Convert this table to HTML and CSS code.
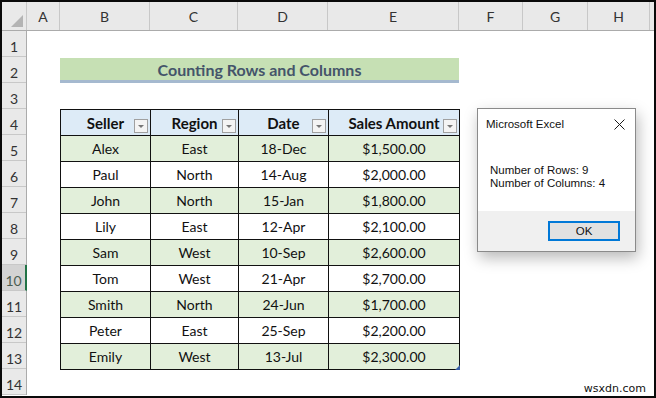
FILE: index.html
```html
<!DOCTYPE html>
<html lang="en">
<head>
  <meta charset="UTF-8" />
  <title>Counting Rows and Columns</title>
  <link rel="stylesheet" href="styles.css">
</head>
<body>
  <div class="sheet">
    <div class="colheads">
      <div class="corner"><span class="tri"></span></div>
      <div class="ch col-a">A</div>
      <div class="ch col-b">B</div>
      <div class="ch col-c">C</div>
      <div class="ch col-d">D</div>
      <div class="ch col-e">E</div>
      <div class="ch col-f">F</div>
      <div class="ch col-g">G</div>
      <div class="ch col-h">H</div>
      <div class="ch col-i"></div>
    </div>

    <div class="grid-body">
      <div class="rowheads">
        <div class="rh">1</div>
        <div class="rh">2</div>
        <div class="rh">3</div>
        <div class="rh">4</div>
        <div class="rh">5</div>
        <div class="rh">6</div>
        <div class="rh">7</div>
        <div class="rh">8</div>
        <div class="rh">9</div>
        <div class="rh active">10</div>
        <div class="rh">11</div>
        <div class="rh">12</div>
        <div class="rh">13</div>
        <div class="rh">14</div>
      </div>

      <div class="cells">
        <div class="title">Counting Rows and Columns</div>

        <table class="data">
          <colgroup>
            <col style="width: 90px">
            <col style="width: 88px">
            <col style="width: 90px">
            <col style="width: 131px">
          </colgroup>
          <thead>
            <tr>
              <th>Seller<span class="filter"></span></th>
              <th>Region<span class="filter"></span></th>
              <th>Date<span class="filter"></span></th>
              <th>Sales Amount<span class="filter"></span></th>
            </tr>
          </thead>
          <tbody>
            <tr class="band"><td>Alex</td><td>East</td><td>18-Dec</td><td>$1,500.00</td></tr>
            <tr><td>Paul</td><td>North</td><td>14-Aug</td><td>$2,000.00</td></tr>
            <tr class="band"><td>John</td><td>North</td><td>15-Jan</td><td>$1,800.00</td></tr>
            <tr><td>Lily</td><td>East</td><td>12-Apr</td><td>$2,100.00</td></tr>
            <tr class="band"><td>Sam</td><td>West</td><td>10-Sep</td><td>$2,600.00</td></tr>
            <tr><td>Tom</td><td>West</td><td>21-Apr</td><td>$2,700.00</td></tr>
            <tr class="band"><td>Smith</td><td>North</td><td>24-Jun</td><td>$1,700.00</td></tr>
            <tr><td>Peter</td><td>East</td><td>25-Sep</td><td>$2,200.00</td></tr>
            <tr class="band last"><td>Emily</td><td>West</td><td>13-Jul</td><td>$2,300.00<span class="resize"></span></td></tr>
          </tbody>
        </table>
      </div>
    </div>

    <div class="dialog">
      <div class="dlg-head">
        <span>Microsoft Excel</span>
        <svg class="close" width="11" height="11" viewBox="0 0 11 11">
          <path d="M0.5 0.5 L10.5 10.5 M10.5 0.5 L0.5 10.5" stroke="#1a1a1a" stroke-width="1" fill="none"/>
        </svg>
      </div>
      <div class="dlg-msg">
        Number of Rows: 9<br>
        Number of Columns: 4
      </div>
      <div class="dlg-foot">
        <button class="ok">OK</button>
      </div>
    </div>

    <div class="mark">wsxdn.com</div>
  </div>
</body>
</html>
```

FILE: styles.css
```css
html {
  background-color: #0a0a0a;
}

body {
  margin: 0;
  padding: 2px 2px 2px 2px;
}

.sheet {
  position: relative;
  width: 652px;
  height: 394px;
  background-color: #fff;
  overflow: hidden;
  font-family: 'Lato', sans-serif;
}

/* column headings */
.colheads {
  display: flex;
  height: 28px;
  background-color: #e9e9e9;
  border-bottom: 1px solid #ababab;
  color: #333;
  font-size: 14px;
}

.corner {
  position: relative;
  width: 25px;
  border-right: 1px solid #c8c8c8;
  box-sizing: border-box;
}

.corner .tri {
  position: absolute;
  right: 3px;
  bottom: 3px;
  width: 0;
  height: 0;
  border-left: 12px solid transparent;
  border-bottom: 12px solid #b4b4b4;
}

.ch {
  display: flex;
  align-items: center;
  justify-content: center;
  border-right: 1px solid #c8c8c8;
  box-sizing: border-box;
}

.col-a { width: 33px; }
.col-b { width: 90px; }
.col-c { width: 88px; }
.col-d { width: 90px; }
.col-e { width: 131px; }
.col-f { width: 64px; }
.col-g { width: 65px; }
.col-h { width: 62px; }
.col-i { width: 4px; border-right: none; }

.grid-body {
  display: flex;
}

/* row headings */
.rowheads {
  width: 25px;
  background-color: #e9e9e9;
  border-right: 1px solid #ababab;
  box-sizing: border-box;
  color: #333;
  font-size: 14px;
}

.rh {
  height: 26px;
  box-sizing: border-box;
  border-bottom: 1px solid #c8c8c8;
  padding-top: 7px;
  text-align: center;
}

.rh.active {
  background-color: #d3d3d3;
  color: #4b5d52;
  border-right: 2px solid #217346;
  margin-right: -1px;
}

/* sheet area */
.cells {
  display: grid;
  grid-template-columns: 33px 90px 88px 90px 131px 64px 65px 62px;
  grid-template-rows: repeat(14, 26px);
}

.title {
  grid-column: 2 / 6;
  grid-row: 2;
  background-color: #c6e0b4;
  border-bottom: 3px solid #a5b9cf;
  margin-top: 1px;
  color: #44546a;
  font-weight: bold;
  font-size: 16px;
  text-align: center;
  line-height: 24px;
}

.data {
  grid-column: 2 / 6;
  grid-row: 4 / 14;
  border-collapse: collapse;
  table-layout: fixed;
  width: 399px;
  height: 261px;
  font-size: 14px;
  color: #111;
}

.data th,
.data td {
  border: 1px solid #111;
  text-align: center;
  padding: 0;
  height: 25px;
}

.data th {
  position: relative;
  background-color: #ddebf7;
  font-weight: bold;
  font-size: 15px;
}

.data tr.band td {
  background-color: #e2efda;
}

.filter {
  position: absolute;
  right: 2px;
  bottom: 2px;
  width: 14px;
  height: 14px;
  box-sizing: border-box;
  border: 1px solid #a0a0a0;
  background-color: #f4f4f4;
}

.filter::after {
  content: "";
  position: absolute;
  left: 3px;
  top: 5px;
  border-left: 3px solid transparent;
  border-right: 3px solid transparent;
  border-top: 3px solid #777;
}

.data tr.last td:last-child {
  position: relative;
}

.resize {
  position: absolute;
  right: -1px;
  bottom: -1px;
  width: 0;
  height: 0;
  border-left: 5px solid transparent;
  border-bottom: 5px solid #3a5fa6;
}

/* message box */
.dialog {
  position: absolute;
  left: 475px;
  top: 106px;
  width: 159px;
  height: 144px;
  box-sizing: border-box;
  border: 1px solid #8a8a8a;
  background-color: #fff;
  box-shadow: 2px 6px 14px rgba(0, 0, 0, 0.28);
  font-family: 'Liberation Sans', sans-serif;
  font-size: 11.5px;
  color: #111;
  display: flex;
  flex-direction: column;
}

.dlg-head {
  display: flex;
  justify-content: space-between;
  align-items: center;
  padding: 9px 10px 0 8px;
}

.dlg-msg {
  padding: 34px 0 0 12px;
  line-height: 13px;
  flex: 1;
}

.dlg-foot {
  height: 40px;
  background-color: #f0f0f0;
  display: flex;
  justify-content: flex-end;
  align-items: center;
  padding-right: 15px;
}

.ok {
  width: 72px;
  height: 20px;
  border: 2px solid #0078d7;
  background-color: #e1e1e1;
  font-family: 'Liberation Sans', sans-serif;
  font-size: 11.5px;
  color: #111;
  padding: 0;
}

.mark {
  position: absolute;
  right: 8px;
  bottom: 1px;
  font-family: 'DejaVu Sans', sans-serif;
  font-size: 11px;
  line-height: 13px;
  color: #111;
}
```
